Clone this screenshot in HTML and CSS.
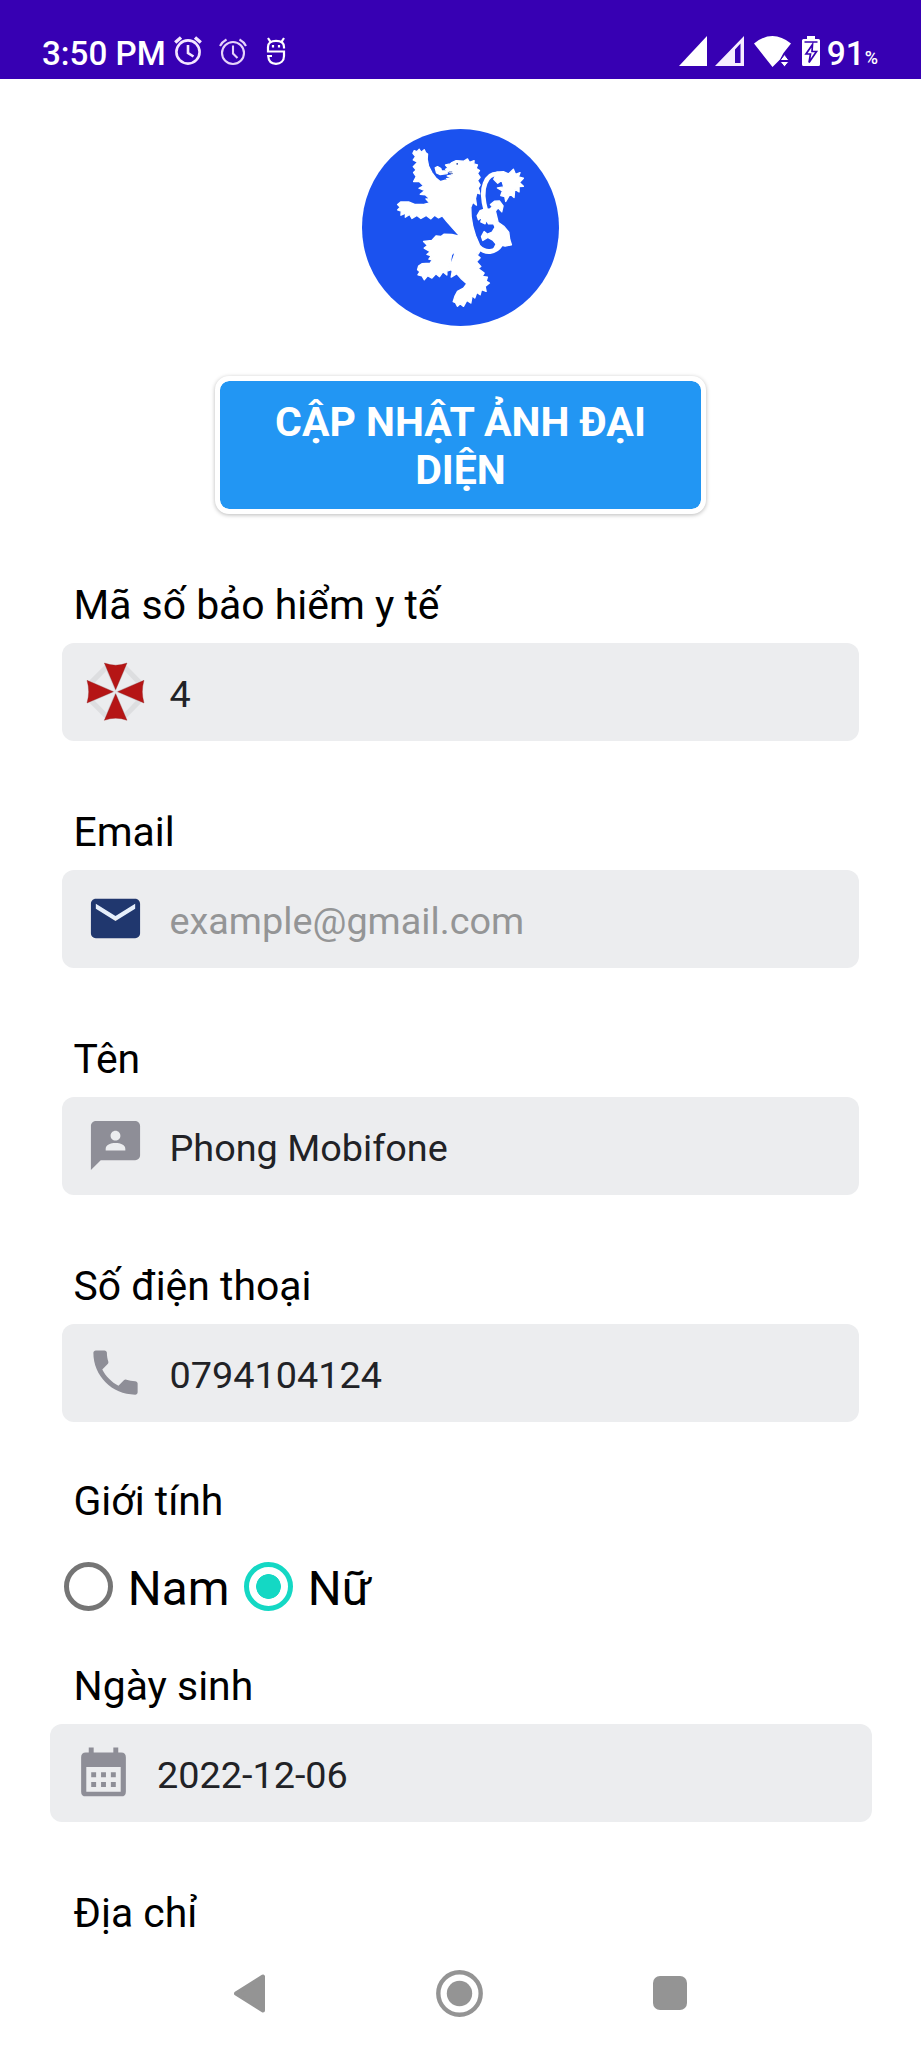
FILE: index.html
```html
<!DOCTYPE html>
<html lang="vi">
<head>
<meta charset="utf-8">
<title>Thông tin cá nhân</title>
<link rel="stylesheet" href="styles.css">
</head>
<body>
<div class="screen">
  <header class="status">
    <div class="status-left">
      <span class="clock">3:50 PM</span>
      <svg class="alarm" viewBox="0 0 28 30" fill="none" stroke="#f4e6ff" stroke-width="2.6"><circle cx="14" cy="16" r="11.6"/><path d="M14 9v8l5.5 3.5"/><path stroke-width="3.400" d="M1.200 6.500 7 1.500M26.800 6.500 21 1.500"/></svg>
      <svg class="alarm-small" viewBox="0 0 28 30" fill="none" stroke="#e6d2fa" stroke-width="2.1"><circle cx="14" cy="17" r="11"/><path d="M14 9.500v8l4.500 4.500M1 10Q3 6 7.500 3.500M27 10Q25 6 20.500 3.500"/></svg>
      <svg class="mascot" viewBox="0 0 20 29" fill="none" stroke="#fff" stroke-width="2.200"><path d="M6 19H2.200C2.500 24 5.500 26.800 10 26.800S18 24 18 19V14.500H2V10C2 6 5 3.800 10 3.800S18 6 18 10V11.500M4.500 4.800 2 1M15.500 4.800 18 1"/><path d="M7 8v2.400M13 8v2.400"/></svg>
    </div>
    <div class="status-right">
      <svg class="signal" viewBox="0 0 28 30" fill="#fff"><path d="M28 0V30H0Z"/></svg>
      <svg class="signal-weak" viewBox="0 0 29 30" fill="#f6ecff"><path fill-rule="evenodd" d="M29 0V30H0ZM25.500 7.500 20 13.500V27H25.500Z"/></svg>
      <svg class="wifi" viewBox="0 0 37 31" fill="#fff"><path d="M0 7.500Q18.500-7.500 37 7.500L29.500 17 26 23.500 18.500 31Z"/><path stroke="#3700b3" stroke-width="1" d="M26 24.500 30.500 18.500 35 24.500ZM26 25.500H35L30.500 31Z"/></svg>
      <svg class="battery" viewBox="0 0 18 30"><path fill="#fff" d="M5 0H13V3H16.500Q18 3 18 4.500V28.500Q18 30 16.500 30H1.500Q0 30 0 28.500V4.500Q0 3 1.500 3H5Z"/><path fill="none" stroke="#3700b3" stroke-width="1.700" d="M2.500 6H15.500M10.500 8.500 4 18H8.500L7 26.500 14.500 15.500H10Z"/></svg>
      <span class="level">91</span><span class="percent">%</span>
    </div>
  </header>

  <main class="content">
    <svg class="avatar" viewBox="35 27 592 592">
      <circle cx="331" cy="323" r="296" fill="#1b52ef"/>
      <g fill="#fff" stroke="#fff" stroke-width="4" stroke-linejoin="round">
        <path d="M192 92 200 95 207 88 213 97 222 89 226 98 232 102 231 118 235 138 245 158 257 174 270 185 285 181 304 183 289 176 305 174 291 168 307 165 302 159 292 153 286 148 294 144 286 135 300 132 305 128 318 122 340 124 352 117 358 127 372 122 371 132 382 135 378 145 388 152 382 160 390 172 382 182 390 195 384 205 387 212 389 222 380 219 376 236 379 256 368 247 362 262 363 290 368 320 376 347 388 375 394 386 384 403 376 402 390 414 379 426 392 440 384 446 402 460 396 470 412 472 408 484 418 490 405 500 408 515 394 510 390 525 380 518 374 535 366 528 362 550 350 542 340 560 330 552 322 560 316 549 309 546 314 530 322 515 340 505 350 492 334 478 320 462 303 472 306 455 300 440 310 412 317 392 304 405 300 430 296 440 302 450 290 454 290 466 278 456 268 471 257 462 245 475 232 468 222 480 215 468 203 465 209 456 202 450 205 439 215 432 240 430 246 420 236 418 243 408 230 404 240 396 222 385 232 377 220 365 245 362 258 348 272 350 282 343 305 344 330 350 310 328 290 305 276 288 265 294 253 286 242 297 228 287 212 296 200 287 185 296 178 284 165 292 166 280 152 286 153 274 142 270 150 262 142 254 152 246 175 246 195 254 218 254 238 249 227 237 240 238 226 225 210 223 224 212 206 205 220 198 207 185 190 185 198 170 190 158 198 150 189 140 202 127 189 120 196 110 188 100Z"/>
        <path d="M255 144 262 140 272 146 274 153 291 153 291 161 270 164 259 159Z"/>
        <path fill="none" stroke-width="14" d="M408 275Q392 220 405 190 418 155 455 163"/>
        <path d="M440 157 460 155 475 162 490 148 496 163 510 158 505 171 520 175 508 188 520 199 507 200 507 216 494 208 492 233 480 222 467 245 464 230 452 227 457 213 442 204 461 201 455 181 443 190 431 178Z"/>
        <path d="M381 288 390 272 403 268 420 267 427 261 421 254 433 244 448 243 459 258 455 276 444 264 436 274 444 307 461 319 476 337 479 359 484 375 465 379 450 375 428 393 438 373 428 361 413 353 398 362 394 350 402 335 412 343 426 337 435 322 430 311 415 312 409 300 405 312 392 306 397 290 385 300Z"/>
        <path fill="none" stroke-width="15" d="M386 382Q402 397 420 395 440 393 452 374"/>
      </g>
      <circle cx="321" cy="132" r="2.500" fill="#173a9c"/><path d="M296 156h10M300 161h8" stroke="#173a9c" stroke-width="2"/>
    </svg>

    <button class="update">CẬP NHẬT ẢNH ĐẠI<br>DIỆN</button>

    <section class="field">
      <div class="label">Mã số bảo hiểm y tế</div>
      <div class="box">
        <svg class="icon" viewBox="108 276 177 177"><path fill="#dddee0" d="M229 286 276 334V396L229 444H164L116 396V334L164 286Z"/><path fill="#ebecee" d="M196 365 224 302 258 338ZM196 365 258 392 224 428ZM196 365 169 428 134 392ZM196 365 134 338 169 302Z"/><path fill="#b51515" stroke="#8e2222" stroke-width="1" d="M163 279Q197 292 231 279L197 359ZM163 451Q197 438 231 451L197 371ZM111 331Q121 365 111 399L190 365ZM282 331Q272 365 282 399L203 365Z"/></svg>
        <span>4</span>
      </div>
    </section>

    <section class="field">
      <div class="label">Email</div>
      <div class="box">
        <svg class="icon" viewBox="0 0 24 24"><rect x="3.500" y="6" width="17" height="6" fill="#e6effb"/><path fill="#20376e" d="M20 4H4c-1.100 0-1.990.9-1.990 2L2 18c0 1.100.9 2 2 2h16c1.100 0 2-.9 2-2V6c0-1.100-.9-2-2-2zm0 4l-8 5-8-5V6l8 5 8-5v2z"/></svg>
        <span class="hint">example@gmail.com</span>
      </div>
    </section>

    <section class="field">
      <div class="label">Tên</div>
      <div class="box">
        <svg class="icon" viewBox="0 0 24 24" fill="#8e8e97"><path d="M20 2H4c-1.100 0-1.990.9-1.990 2L2 22l4-4h14c1.100 0 2-.9 2-2V4c0-1.100-.9-2-2-2zm-8 4c1.100 0 2 .9 2 2s-.9 2-2 2-2-.9-2-2 .9-2 2-2zm4 8H8v-.570c0-.810.480-1.530 1.220-1.850.850-.370 1.790-.580 2.780-.580.990 0 1.930.210 2.780.580.740.320 1.220 1.040 1.220 1.850V14z"/></svg>
        <span>Phong Mobifone</span>
      </div>
    </section>

    <section class="field">
      <div class="label">Số điện thoại</div>
      <div class="box">
        <svg class="icon" viewBox="0 0 24 24" fill="#8e8e97"><path d="M6.620 10.790c1.440 2.830 3.760 5.140 6.590 6.590l2.200-2.200c.270-.270.670-.360 1.020-.240 1.120.370 2.330.570 3.570.570.550 0 1 .450 1 1V20c0 .550-.450 1-1 1-9.390 0-17-7.610-17-17 0-.550.450-1 1-1h3.500c.550 0 1 .450 1 1 0 1.250.200 2.450.570 3.570.110.350.030.740-.250 1.020l-2.200 2.200z"/></svg>
        <span>0794104124</span>
      </div>
    </section>

    <section class="gender">
      <div class="label">Giới tính</div>
      <div class="options">
        <div class="option"><i class="radio"></i><span>Nam</span></div>
        <div class="option"><i class="radio checked"></i><span>Nữ</span></div>
      </div>
    </section>

    <section class="field birth">
      <div class="label">Ngày sinh</div>
      <div class="box">
        <svg class="icon" viewBox="0 0 24 24" fill="#8e8e97"><path fill-rule="evenodd" d="M6 1.800h2v2.100h8V1.800h2v2.100h1.200q1.900 0 1.900 1.900v14q0 1.900-1.900 1.900H4.800q-1.900 0-1.900-1.900v-14q0-1.900 1.900-1.900H6ZM5 9.800v10h14v-10Z"/><path d="M7 11.900h2v2H7zM11 11.900h2v2h-2zM15 11.900h2v2h-2zM7 15.900h2v2H7zM11 15.900h2v2h-2zM15 15.900h2v2h-2z"/></svg>
        <span>2022-12-06</span>
      </div>
    </section>

    <div class="label">Địa chỉ</div>
  </main>

  <nav class="navbar">
    <svg class="back" viewBox="0 0 31 39"><path d="M2 19.500 29 2.500V36.500Z" fill="#949494" stroke="#949494" stroke-width="4" stroke-linejoin="round"/></svg>
    <svg class="home" viewBox="0 0 47 47"><circle cx="23.500" cy="23.500" r="21.200" fill="none" stroke="#949494" stroke-width="4.400"/><circle cx="23.500" cy="23.500" r="12.700" fill="#949494"/></svg>
    <i class="recent"></i>
  </nav>
</div>
</body>
</html>
```
FILE: styles.css
```css
* { box-sizing: border-box; }
body { margin: 0; background: #fff; color: #000; font-family: Roboto, "Noto Sans", sans-serif; }
svg { display: block; flex: none; }

.screen { width: 921px; height: 2048px; display: flex; flex-direction: column; overflow: hidden; }

.status { flex: none; height: 79px; background: #3700b3; color: #fff; display: flex; justify-content: space-between; padding: 36px 43px 0 42px; }
.status-left, .status-right { display: flex; align-items: flex-start; }
.clock { width: 132px; font-size: 33.2px; font-weight: 500; line-height: 36px; white-space: nowrap; }
.alarm { width: 28px; height: 30px; }
.alarm-small { width: 28px; height: 30px; margin-left: 17px; }
.mascot { width: 20px; height: 29px; margin: 1px 0 0 19px; }
.signal { width: 28px; height: 30px; }
.signal-weak { width: 29px; height: 30px; margin-left: 8px; }
.wifi { width: 37px; height: 31px; margin-left: 10px; }
.battery { width: 18px; height: 30px; margin-left: 11px; }
.level { margin-left: 6.500px; font-size: 33.5px; font-weight: 500; line-height: 36px; }
.percent { font-size: 18px; font-weight: 500; line-height: 43px; }

.content { flex: 1; min-height: 0; overflow: hidden; display: flex; flex-direction: column; padding: 50px 62px 0; }
.avatar { width: 197px; height: 197px; align-self: center; }
.update { flex: none; align-self: center; width: 491px; height: 138px; margin-top: 49.500px; padding: 3px 0 0; border: 5px solid #fff; border-radius: 14px; background: #2296f3; background-clip: padding-box; box-shadow: 0 1px 4px rgba(0, 0, 0, .28); color: #fff; font: 700 41px/48.5px Roboto, sans-serif; }

.label { flex: none; padding-left: 11.500px; font-size: 40.9px; line-height: 48px; white-space: nowrap; }
.field { flex: none; height: 227px; }
.update + .field { margin-top: 67.500px; }
.box { height: 98.500px; margin-top: 13.500px; padding-left: 24px; display: flex; align-items: center; gap: 24.500px; border-radius: 12px; background: #ecedef; color: #212226; font-size: 37.8px; line-height: 44px; }
.box span { padding-top: 4.500px; }
.box .hint { color: #949596; }
.icon { width: 59px; height: 59px; }

.gender { flex: none; height: 185px; margin-top: -12px; }
.options { display: flex; margin-top: 36px; padding-left: 2px; }
.option { width: 180px; display: flex; align-items: center; gap: 14.500px; font-size: 47.6px; line-height: 54px; }
.option span { padding-top: 1px; }
.radio { flex: none; width: 49.300px; height: 49.300px; margin-top: -4px; border: 5px solid #757575; border-radius: 50%; }
.radio.checked { border-color: #14d8c4; background: radial-gradient(circle, #14d8c4 0 12px, transparent 12.700px); }
.birth .box { margin-left: -12.500px; margin-right: -12.500px; }

.navbar { flex: none; height: 110px; display: flex; justify-content: space-between; align-items: center; padding: 0 234px; background: #fff; }
.back { width: 31px; height: 39px; }
.home { width: 47px; height: 47px; }
.recent { width: 34px; height: 34px; border-radius: 7px; background: #949494; }
```
